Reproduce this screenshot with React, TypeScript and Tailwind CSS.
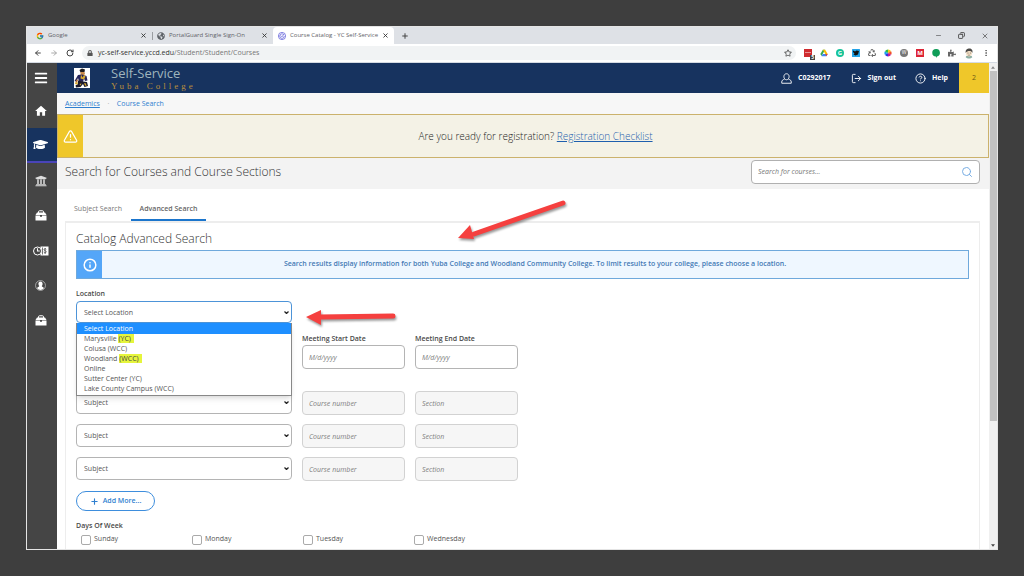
import { ReactNode, useState } from "react";
import {
  FaBriefcase,
  FaBars,
  FaGlobeAmericas,
  FaGraduationCap,
  FaLock,
  FaPuzzlePiece,
  FaRecycle,
  FaRegStar,
  FaUniversity,
} from "react-icons/fa";
import { FcGoogle } from "react-icons/fc";
import { MdHome } from "react-icons/md";
import {
  ArrowLeft,
  ArrowRight,
  CircleHelp,
  Copy,
  EllipsisVertical,
  Info,
  LogOut,
  Minus,
  Plus,
  RotateCw,
  Search,
  TriangleAlert,
  X,
} from "lucide-react";

const locations = [
  { name: "Select Location" },
  { name: "Marysville", code: "(YC)", marked: true },
  { name: "Colusa", code: "(WCC)" },
  { name: "Woodland", code: "(WCC)", marked: true },
  { name: "Online" },
  { name: "Sutter Center", code: "(YC)" },
  { name: "Lake County Campus", code: "(WCC)" },
];

const days = ["Sunday", "Monday", "Tuesday", "Wednesday"];

function ClockMoneyIcon() {
  return (
    <svg viewBox="0 0 32 20" className="w-4 h-[10px]">
      <rect x="15" y="1" width="16" height="18" fill="#fff" />
      <path d="M19 3v14M26.500 6.500c-1-1.500-4.500-1.500-4.500.8 0 2.500 4.500 1.600 4.500 4.200 0 2.500-3.800 2.500-5 .7M24.200 4v12" stroke="#454545" strokeWidth="1.500" fill="none" />
      <circle cx="9" cy="10" r="8" fill="#454545" stroke="#fff" strokeWidth="2" />
      <path d="M9 4.500V10h4.500" stroke="#fff" strokeWidth="2.200" fill="none" />
    </svg>
  );
}

function PersonCircleIcon() {
  return (
    <svg viewBox="0 0 20 20" className="w-[11px] h-[11px]">
      <circle cx="10" cy="10" r="9" fill="none" stroke="#d8d8d8" strokeWidth="1.200" />
      <path d="M10 2.500c2.600 0 3.800 2 3.800 4.300 0 1.900-.8 3.400-1.600 4.300.2 1.500 3.300 1.500 3.800 3.900-1.500 2-3.700 3-6 3s-4.500-1-6-3c.5-2.400 3.600-2.400 3.800-3.900-.8-.9-1.600-2.400-1.600-4.300 0-2.300 1.200-4.300 3.800-4.300z" fill="#fff" />
    </svg>
  );
}

function ToolcaseIcon() {
  return (
    <svg viewBox="0 0 24 22" className="w-3 h-[11px]">
      <path d="M7 6V3.500A2 2 0 0 1 9 1.500h6a2 2 0 0 1 2 2V6" fill="none" stroke="#fff" strokeWidth="2" />
      <path d="M4 5h16l3 5H1z" fill="#fff" />
      <path d="M1 11.200h9v2.300h4v-2.300h9V21H1z" fill="#fff" />
    </svg>
  );
}

function UserIcon() {
  return (
    <svg viewBox="0 0 22 22" className="w-[11px] h-[11px]" fill="none" stroke="#fff" strokeWidth="1.800" strokeLinejoin="round">
      <path d="M11 1.500c3.300 0 5.200 2.500 5.200 5.800s-2 6.200-5.200 6.200-5.200-2.900-5.200-6.200S7.700 1.500 11 1.500z" />
      <path d="M7 12.500c-3.500.8-5.500 2.500-5.500 5.500v2.500h19V18c0-3-2-4.700-5.500-5.500" />
    </svg>
  );
}

function Mascot() {
  return (
    <svg viewBox="0 0 32 40" className="w-4 h-5 ml-[17px]" aria-label="Yuba College">
      <rect width="32" height="40" fill="#fff" />
      <path d="M11 4l5-3 6 2-1 5-8 1z" fill="#1d1b1e" />
      <path d="M13 8h8l1 4-4 4-5-2z" fill="#c98a4a" />
      <path d="M8 14l8-1 9 3 2 9-5 1-2-5-2 7-8-1-2-7-3 7-4-1z" fill="#27265c" />
      <path d="M14 13l3 6 3-5 3 3-3 6-7-2z" fill="#d9a92d" />
      <path d="M8 25l10 2 8 1 2 8-7 2-3-6-5 6-9 1-1-4 5-3z" fill="#1c1a2c" />
      <path d="M3 28l5 1-1 4-5-1zM20 30l4 1 1 5-3-1zM11 32l4-1-2 4z" fill="#d9a92d" />
      <path d="M5 23l3 1-2 5-3-2z" fill="#b46b36" />
    </svg>
  );
}

function DriveIcon() {
  return (
    <svg viewBox="0 0 24 22" className="w-2 h-2">
      <path d="M8.500 1h7L8 14l-3.500 6L1 14z" fill="#34a853" />
      <path d="M8.500 1h7L23 14h-7z" fill="#fbbc05" />
      <path d="M8 14h15l-3.500 6.500h-15z" fill="#4285f4" />
      <path d="M16 14h7l-3.500 6.500z" fill="#ea4335" />
    </svg>
  );
}

function ColorWheel() {
  return (
    <svg viewBox="0 0 20 20" className="w-2 h-2">
      <path d="M10 10L10 1a9 9 0 0 1 7.800 4.500z" fill="#f6c915" />
      <path d="M10 10l7.800-4.500a9 9 0 0 1 0 9z" fill="#f0512b" />
      <path d="M10 10l7.800 4.500A9 9 0 0 1 10 19z" fill="#c2189b" />
      <path d="M10 10v9a9 9 0 0 1-7.800-4.500z" fill="#3036e0" />
      <path d="M10 10l-7.800 4.500a9 9 0 0 1 0-9z" fill="#179ff0" />
      <path d="M10 10L2.200 5.500A9 9 0 0 1 10 1z" fill="#2bbd4a" />
    </svg>
  );
}

function Avatar() {
  return (
    <svg viewBox="0 0 24 26" className="w-[10px] h-[11px]">
      <path d="M4 22c1-4 4-5 8-5s7 1 8 5c-4 4-12 4-16 0z" fill="#8fb0a5" />
      <ellipse cx="12" cy="12" rx="7" ry="8" fill="#f4dfc4" />
      <path d="M4 12C3 3 8 1 13 1s9 4 7 11c-1-4-4-5-7-5S6 8 4 12z" fill="#4b4a48" />
      <path d="M8 12h3M14 12h3M10 17h4" stroke="#4b4a48" strokeWidth="1.300" />
    </svg>
  );
}

function Arrow({ className, angle }: { className: string; angle: "up" | "flat" }) {
  const up = angle === "up";
  return (
    <svg viewBox={up ? "0 0 112 48" : "0 0 96 20"} className={className} aria-hidden="true">
      <g className="drop-shadow-[1px_2px_1px_rgba(0,0,0,0.4)]">
        {up ? (
          <>
            <path d="M17 36L106 5" stroke="#f5403f" strokeWidth="5" strokeLinecap="round" />
            <path d="M1 40l12-13 4 14z" fill="#f5403f" />
          </>
        ) : (
          <>
            <path d="M14 9L88 8" stroke="#f5403f" strokeWidth="5" strokeLinecap="round" />
            <path d="M1 9l15-7v15z" fill="#f5403f" />
          </>
        )}
      </g>
    </svg>
  );
}

function BrowserTab({ icon, title, active }: { icon: ReactNode; title: string; active?: boolean }) {
  return (
    <div className={`flex items-center w-[121px] shrink-0 h-full pl-[5px] pr-[5px] gap-1 ${active ? "bg-white rounded-t-sm" : ""}`}>
      <span className="w-2 shrink-0">{icon}</span>
      <span className="flex-1 whitespace-nowrap text-[6px] text-[#5f6368]">{title}</span>
      <button aria-label="Close tab">
        <X className="w-[7px] h-[7px] text-[#333]" strokeWidth={3} />
      </button>
    </div>
  );
}

function BrowserChrome() {
  return (
    <>
      <div className="flex items-center h-[17px] bg-[#dee1e6]">
        <div className="flex items-center h-full pl-1">
          <BrowserTab icon={<FcGoogle className="w-2 h-2" />} title="Google" />
          <span className="w-px h-2 -mr-px bg-[#9a9da1]" />
          <BrowserTab icon={<FaGlobeAmericas className="w-2 h-2 text-[#5f6368]" />} title="PortalGuard Single Sign-On" />
          <BrowserTab
            active
            icon={
              <svg viewBox="0 0 20 20" className="w-2 h-2" fill="none" stroke="#5553d6" strokeWidth="1.800">
                <circle cx="10" cy="10" r="9" />
                <path d="M13.500 6A5.500 5.500 0 1 0 15.500 10M7 9l3 3 5-7" />
              </svg>
            }
            title="Course Catalog - YC Self-Service"
          />
        </div>
        <button aria-label="New tab" className="ml-[7px]">
          <Plus className="w-2 h-2 text-[#444]" strokeWidth={3} />
        </button>
        <div className="flex items-center gap-4 ml-auto pr-2 text-[#444]">
          <button aria-label="Minimize"><Minus className="w-[7px] h-[7px]" /></button>
          <button aria-label="Restore"><Copy className="w-[7px] h-[7px] -scale-x-100" strokeWidth={3} /></button>
          <button aria-label="Close"><X className="w-2 h-2" /></button>
        </div>
      </div>
      <div className="flex items-center h-[19px] pl-[7px] pr-[7px] bg-white border-b border-[#d5dbe3]">
        <div className="flex items-center gap-2 text-[#444]">
          <button aria-label="Back"><ArrowLeft className="w-2 h-2" strokeWidth={3} /></button>
          <button aria-label="Forward"><ArrowRight className="w-2 h-2 text-[#aaa]" strokeWidth={3} /></button>
          <button aria-label="Reload"><RotateCw className="w-2 h-2" strokeWidth={3} /></button>
        </div>
        <div className="flex flex-1 items-center h-[14px] ml-2 mr-2 pl-[5px] pr-1 rounded-full bg-[#f1f3f4] text-[7px] text-[#777]">
          <FaLock className="w-[6px] h-[6px] mr-[5px] text-[#555]" />
          <span className="flex-1"><span className="text-[#333]">yc-self-service.yccd.edu</span>/Student/Student/Courses</span>
          <FaRegStar className="w-2 h-2 text-[#444]" />
        </div>
        <div className="flex items-center gap-2 text-[#666]">
          <span className="relative flex items-center justify-center w-2 h-2 bg-[#cf2b2f]">
            <svg viewBox="0 0 16 16" className="w-2 h-2"><path d="M3 7h2M7 7h2M11 7h2" stroke="#fff" strokeWidth="2" /></svg>
            <span className="absolute -right-[3px] -bottom-[3px] px-px bg-[#444] text-[5px] font-bold leading-[5px] text-white">5</span>
          </span>
          <DriveIcon />
          <span className="flex items-center justify-center w-2 h-2 rounded-full bg-[#15c39a] text-[6px] font-bold text-white">G</span>
          <svg viewBox="0 0 16 16" className="w-2 h-2">
            <rect width="16" height="16" rx="1" fill="#23a3e8" />
            <path d="M2 3l4 2 3-2 5 1-2 7-5 2-4-2 2-2-3-3z" fill="#111" />
          </svg>
          <FaRecycle className="w-2 h-2" />
          <ColorWheel />
          <span className="flex items-center justify-center w-2 h-2 rounded-full bg-[#777] text-[5px] text-white">W</span>
          <span className="flex items-center justify-center w-2 h-2 bg-[#dc2436] text-[6px] font-bold text-white">M</span>
          <svg viewBox="0 0 16 18" className="w-2 h-[9px]"><path d="M8 0a7.500 7.500 0 0 1 2 14.800L8 18v-3A7.500 7.500 0 0 1 8 0z" fill="#0f9d58" /></svg>
          <FaPuzzlePiece className="w-2 h-2" />
          <Avatar />
          <EllipsisVertical className="w-2 h-2" strokeWidth={3} />
        </div>
      </div>
    </>
  );
}

function Sidebar() {
  const item = "flex items-center justify-center w-full h-[35px] pr-[3px]";
  return (
    <nav className="w-[30px] shrink-0 bg-[#454545] text-white">
      <button aria-label="Menu" className="flex items-center justify-center w-full h-[30px] pr-[3px]"><FaBars className="w-[14px] h-[14px]" /></button>
      <a href="#" aria-label="Home" className={item}><MdHome className="w-[14px] h-[14px]" /></a>
      <a href="#" aria-label="Academics" className={`${item} bg-[#17335f] border-b-2 border-[#4a44b8]`}><FaGraduationCap className="w-[15px] h-[15px]" /></a>
      <a href="#" aria-label="Banking" className={item}><FaUniversity className="w-3 h-3 text-[#ddd]" /></a>
      <a href="#" aria-label="Employment" className={item}><ToolcaseIcon /></a>
      <a href="#" aria-label="Time and pay" className={item}><ClockMoneyIcon /></a>
      <a href="#" aria-label="Profile" className={item}><PersonCircleIcon /></a>
      <a href="#" aria-label="Faculty" className={item}><ToolcaseIcon /></a>
    </nav>
  );
}

function SelectBox({ id, label, focused, options }: { id: string; label?: string; focused?: boolean; options: string[] }) {
  return (
    <div className="relative">
      <select
        id={id}
        aria-label={label}
        className={`appearance-none block w-full pl-[7px] pt-[2px] rounded-sm border bg-white text-[7px] text-[#555] outline-none ${focused ? "h-[22px] border-[#4d94d8]" : "h-[23px] border-[#b4b4b4]"}`}
      >
        {options.map((o) => <option key={o}>{o}</option>)}
      </select>
      <svg viewBox="0 0 10 6" className="absolute right-[3px] top-[10px] w-[5px] h-[3px] pointer-events-none" fill="none" stroke="#222" strokeWidth="2.500">
        <path d="M1 1l4 4 4-4" />
      </svg>
    </div>
  );
}

function SearchForm() {
  const [rows, setRows] = useState(3);
  const label = "block h-3 leading-3 font-semibold";
  const field = "block w-full h-6 px-[6px] rounded-sm border text-[7px] placeholder:italic placeholder:text-[#808080] outline-none";

  return (
    <form className="relative" onSubmit={(e) => e.preventDefault()}>
      <div className="w-[216px] relative">
        <label htmlFor="location" className={`${label} mb-px`}>Location</label>
        <SelectBox id="location" focused options={locations.map((l) => (l.code ? `${l.name} ${l.code}` : l.name))} />
        <ul role="listbox" aria-label="Location options" className="absolute left-0 right-0 top-full z-10 pb-px bg-white border border-t-0 border-[#888] shadow-md leading-[10px] text-[#555]">
          {locations.map((l, i) => (
            <li key={l.name} role="option" aria-selected={i === 0} className={`pl-[7px] ${i === 0 ? "pt-px bg-[#1e8fff] text-white" : ""}`}>
              {l.name} {l.code && <span className={l.marked ? "bg-[#e6f53c] pr-[3px] text-[#444]" : ""}>{l.code}</span>}
            </li>
          ))}
        </ul>
      </div>
      <Arrow angle="up" className="absolute left-[381px] -top-[90px] w-[112px] h-12 overflow-visible" />
      <Arrow angle="flat" className="absolute left-[229px] top-5 w-24 h-5 overflow-visible" />

      <div className="grid grid-cols-[216px_103px_103px] gap-x-[10px] mt-[10px]">
        <div className="col-start-2">
          <label htmlFor="start" className={label}>Meeting Start Date</label>
          <input id="start" placeholder="M/d/yyyy" className={`${field} border-[#b4b4b4]`} />
        </div>
        <div>
          <label htmlFor="end" className={label}>Meeting End Date</label>
          <input id="end" placeholder="M/d/yyyy" className={`${field} border-[#b4b4b4]`} />
        </div>
      </div>

      <div className="grid grid-cols-[216px_103px_103px] gap-x-[10px] gap-y-[9px] mt-[22px]">
        {Array.from({ length: rows }, (_, i) => (
          <div key={i} className="contents">
            <SelectBox id={`subject-${i}`} label="Subject" options={["Subject"]} />
            <input aria-label="Course number" placeholder="Course number" disabled className={`${field} bg-[#f6f6f6] border-[#d2d2d2]`} />
            <input aria-label="Section" placeholder="Section" disabled className={`${field} bg-[#f6f6f6] border-[#d2d2d2]`} />
          </div>
        ))}
      </div>

      <button type="button" onClick={() => setRows(rows + 1)} className="flex items-center justify-center gap-1 w-[79px] h-5 mt-[10px] rounded-full border border-[#3e8edd] font-semibold text-[#2f7fd0]">
        <Plus className="w-[9px] h-[9px]" strokeWidth={3} />
        Add More...
      </button>

      <fieldset className="mt-[9px]">
        <legend className={`${label} mb-[2px]`}>Days Of Week</legend>
        <div className="grid grid-cols-[repeat(4,111px)] pl-[5px]">
          {days.map((d) => (
            <label key={d} className="flex items-center gap-[3px] h-[11px] text-[#555]">
              <input type="checkbox" className="appearance-none w-[10px] h-[10px] rounded-xs border border-[#aaa] bg-white" />
              {d}
            </label>
          ))}
        </div>
      </fieldset>
    </form>
  );
}

export default function App() {
  return (
    <div className="min-h-screen p-[26px] bg-[#3e3e3e] font-['Open_Sans',sans-serif] text-[7px] text-[#4a4a4a]">
      <div className="border border-[#e4e4e4] bg-white overflow-hidden">
        <BrowserChrome />
        <div className="flex">
          <Sidebar />
          <div className="flex-1 min-w-0">
            <header className="flex items-center h-[30px] bg-[#17335f] text-white">
              <Mascot />
              <div className="ml-[21px]">
                <div className="text-[13px] leading-4 text-[#9fb5bd]">Self-Service</div>
                <div className="font-['Liberation_Serif',serif] text-[9px] leading-[11px] tracking-[3px] text-[#b98f3c]">Yuba College</div>
              </div>
              <div className="flex items-center h-full ml-auto font-bold">
                <button className="flex items-center gap-[6px] mr-5"><UserIcon />C0292017</button>
                <button className="flex items-center gap-[6px] mr-[19px]"><LogOut className="w-[11px] h-[11px]" />Sign out</button>
                <button className="flex items-center gap-[6px] mr-[11px]"><CircleHelp className="w-[11px] h-[11px]" />Help</button>
                <button className="w-[30px] h-full bg-[#efc72a] font-normal text-[#6d5a16]">2</button>
              </div>
            </header>

            <nav className="flex items-center h-[21px] pl-2 pt-px bg-[#f7f7f7] text-[#2f7fd0]">
              <a href="#" className="underline">Academics</a>
              <span className="w-[17px] text-center text-[#999]">·</span>
              <a href="#">Course Search</a>
            </nav>

            <div className="flex h-11 border border-[#cbb26c] bg-[#f4f2e6]">
              <div className="flex items-center justify-center w-[25px] bg-[#efc72a]">
                <TriangleAlert className="w-[15px] h-[15px] text-white" />
              </div>
              <p className="flex-1 self-center text-center text-[10px] font-light text-[#222]">
                Are you ready for registration? <a href="#" className="underline text-[#1f5fae]">Registration Checklist</a>
              </p>
            </div>

            <div className="flex items-start justify-between h-[31px] pl-2 pr-[9px] pt-[2px] bg-[#f3f3f3]">
              <h1 className="text-[12px] leading-6 font-light text-[#333]">Search for Courses and Course Sections</h1>
              <div className="flex items-center w-[229px] h-6 px-[6px] bg-white border border-[#b0b0b0] rounded-sm">
                <input aria-label="Search for courses" placeholder="Search for courses..." className="flex-1 min-w-0 outline-none placeholder:italic placeholder:text-[#777]" />
                <Search className="w-3 h-3 text-[#79aee4]" />
              </div>
            </div>

            <main className="pl-2 pr-[9px]">
              <div role="tablist" className="flex h-8">
                <button role="tab" aria-selected="false" className="w-[66px] pt-[9px] text-[#777]">Subject Search</button>
                <button role="tab" aria-selected="true" className="w-[75px] pt-[10px] font-semibold border-b-2 border-[#1b75cc] text-[#666]">Advanced Search</button>
              </div>
              <section className="px-[10px] pt-2 pb-1 border-x border-t-2 border-[#ededed]">
                <h2 className="mb-[3px] text-[12px] leading-4 font-light text-[#333]">Catalog Advanced Search</h2>
                <div className="flex h-[29px] mb-[9px] border border-[#6fa9dc] bg-[#eff7ff]">
                  <div className="flex items-center justify-center w-[25px] bg-[#54a6f8]">
                    <Info className="w-[14px] h-[14px] text-white" strokeWidth={2.5} />
                  </div>
                  <p className="flex-1 self-center text-center font-semibold text-[#4479b5]">
                    Search results display information for both Yuba College and Woodland Community College. To limit results to your college, please choose a location.
                  </p>
                </div>
                <SearchForm />
              </section>
            </main>
          </div>
          <div className="flex flex-col items-center w-2 shrink-0 bg-[#f0f0f0]">
            <span className="flex items-center h-2"><svg viewBox="0 0 8 5" className="w-1 h-[3px]"><path d="M0 5l4-5 4 5z" fill="#888" /></svg></span>
            <span className="w-[7px] h-[350px] bg-[#c1c1c1]" />
            <span className="flex items-center h-2 mt-auto"><svg viewBox="0 0 8 5" className="w-1 h-[3px]"><path d="M0 0l4 5 4-5z" fill="#444" /></svg></span>
          </div>
        </div>
      </div>
    </div>
  );
}
